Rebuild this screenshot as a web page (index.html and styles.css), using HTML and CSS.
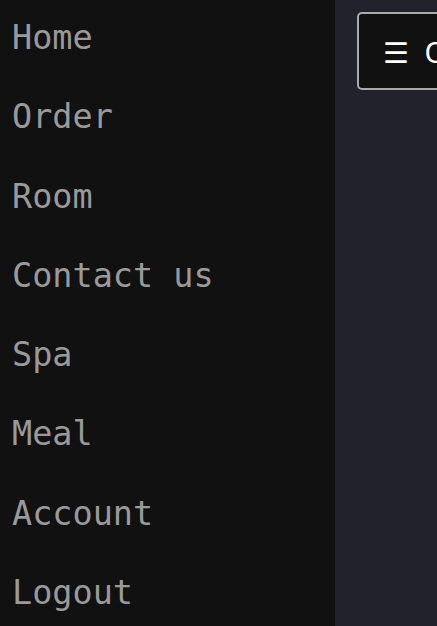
FILE: index.html
```html
<!DOCTYPE html>
<html>
<head>
<meta charset="utf-8">
<link rel="stylesheet" href="styles.css">
</head>
<body>
<div class="layout">
  <nav class="sidebar">
    <a class="link" href="#">Home</a>
    <a class="link" href="#">Order</a>
    <a class="link" href="#">Room</a>
    <a class="link" href="#">Contact us</a>
    <a class="link" href="#">Spa</a>
    <a class="link" href="#">Meal</a>
    <a class="link" href="#">Account</a>
    <a class="link" href="#">Logout</a>
  </nav>
  <main class="main">
    <button class="open-btn"><span class="icon">☰</span> Open Sidebar</button>
  </main>
</div>
</body>
</html>
```
FILE: styles.css
```css
html, body {
  margin: 0;
  padding: 0;
  height: 100%;
  overflow: hidden;
}
body {
  background: #22222c;
}
.layout {
  display: flex;
  height: 100%;
}
.sidebar {
  width: 335px;
  flex: none;
  background: #111111;
  display: flex;
  flex-direction: column;
  margin-top: -2px;
}
.link {
  font-family: "DejaVu Sans Mono", monospace;
  font-size: 33.5px;
  line-height: 79.3px;
  height: 79.3px;
  color: #9a9a9a;
  text-decoration: none;
  padding-left: 12px;
  white-space: nowrap;
}
.main {
  flex: 1;
  padding: 12px 0 0 22px;
  overflow: hidden;
}
.open-btn {
  height: 78px;
  background: #111111;
  color: #ffffff;
  border: 2px solid #aaaaaa;
  border-radius: 5px;
  font-family: "Noto Sans", sans-serif;
  font-size: 29px;
  padding: 0 24px;
  white-space: nowrap;
}
.icon {
  margin-right: 8px;
}
```
